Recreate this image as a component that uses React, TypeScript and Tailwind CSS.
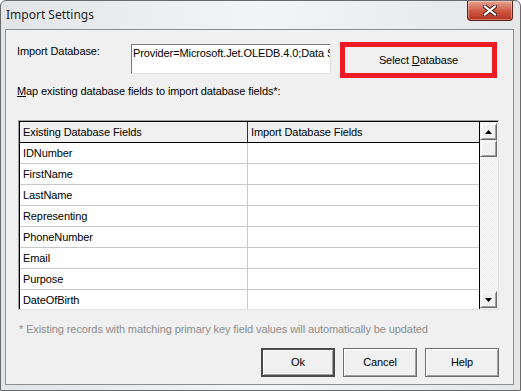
import React from 'react';

const fields = [
  'IDNumber',
  'FirstName',
  'LastName',
  'Representing',
  'PhoneNumber',
  'Email',
  'Purpose',
  'DateOfBirth',
];

function CloseGlyph() {
  return (
    <svg width="14" height="11" viewBox="0 0 14 11">
      <path
        d="M2 1.5 L12 9.5 M12 1.5 L2 9.5"
        stroke="#3b1a14"
        strokeWidth="4"
        strokeLinecap="square"
      />
      <path
        d="M2 1.5 L12 9.5 M12 1.5 L2 9.5"
        stroke="#ffffff"
        strokeWidth="2.2"
        strokeLinecap="square"
      />
    </svg>
  );
}

function Arrow({ down }: { down?: boolean }) {
  return (
    <svg width="7" height="4" viewBox="0 0 7 4">
      <path d={down ? 'M0 0 H7 L3.5 4 Z' : 'M0 4 H7 L3.5 0 Z'} fill="#000" />
    </svg>
  );
}

function ScrollButton({ children, className = '' }: { children?: React.ReactNode; className?: string }) {
  return (
    <div
      className={`w-[17px] h-[17px] flex items-center justify-center bg-[#f0f0f0] border border-t-[#f0f0f0] border-l-[#f0f0f0] border-r-[#696969] border-b-[#696969] shadow-[inset_1px_1px_0_#ffffff,inset_-1px_-1px_0_#a0a0a0] ${className}`}
    >
      {children}
    </div>
  );
}

function DialogButton({ label, isDefault }: { label: string; isDefault?: boolean }) {
  return (
    <button
      className={`w-[74px] h-[29px] flex items-center justify-center bg-[#f0f0f0] text-[11px] text-black ${
        isDefault
          ? 'border-2 border-[#4a4a4a] shadow-[inset_1px_1px_0_#ffffff,inset_-1px_-1px_0_#a0a0a0]'
          : 'border border-[#6e6e6e] shadow-[inset_1px_1px_0_#ffffff,inset_-1px_-1px_0_#a0a0a0]'
      }`}
    >
      {label}
    </button>
  );
}

export default function App() {
  return (
    <div
      className="relative w-[521px] h-[391px] overflow-hidden bg-gradient-to-r from-[#e2e5e8] via-[#f3f4f5] to-[#e4e6e8] border border-[#6a6a6a] rounded-t-[6px]"
      style={{ fontFamily: '"Liberation Sans", Arial, sans-serif' }}
    >
      {/* title bar */}
      <div className="h-[28px] flex items-center pl-[5px]">
        <span
          className="text-[12px] text-[#1e1e1e]"
          style={{ fontFamily: '"Noto Sans", "Open Sans", sans-serif' }}
        >
          Import Settings
        </span>
      </div>
      <div className="absolute left-[466px] top-0 w-[46px] h-[20px] rounded-b-[4px] border border-t-0 border-[#5c2318] bg-gradient-to-b from-[#e8a596] via-[#cf5b47] to-[#b8301d] flex items-center justify-center shadow-[inset_0_0_0_1px_rgba(255,255,255,0.35)]">
        <CloseGlyph />
      </div>

      {/* client area */}
      <div className="ml-[4px] w-[509px] h-[356px] border border-[#8c8c8c] bg-[#f0f0f0] text-[11px] tracking-[-0.1px] text-black">
        <div className="flex items-start pt-[12px] pl-[11px]">
          <div className="w-[114px] pt-[3px] leading-[13px]">Import Database:</div>
          <div className="mt-[2px] w-[200px] h-[30px] bg-white border border-t-[#7a7a7a] border-l-[#7a7a7a] border-r-[#e3e3e3] border-b-[#e3e3e3] overflow-hidden whitespace-nowrap pl-[1px] pt-[2px] leading-[13px]">
            Provider=Microsoft.Jet.OLEDB.4.0;Data Source=C:\Data\Visitors.mdb
          </div>
          <div className="ml-[9px] w-[157px] h-[36px] border-[5px] border-[#ed1c24] bg-[#f0f0f0] flex items-center justify-center whitespace-nowrap">
            <span>
              Select <u>D</u>atabase
            </span>
          </div>
        </div>

        <div className="mt-[7px] pl-[11px] leading-[13px]">
          <u>M</u>ap existing database fields to import database fields*:
        </div>

        {/* grid */}
        <div className="mt-[22px] ml-[12px] w-[481px] h-[190px] border border-[#a0a0a0] border-r-[#e3e3e3] border-b-[#e3e3e3] overflow-hidden">
          <div className="flex h-full border-t border-l border-black">
            <div className="flex-1 border-r border-black bg-white overflow-hidden">
              <div className="flex h-[21px] bg-[#f0f0f0] border-b border-black">
                <div className="w-[228px] border-r border-[#303030] pl-[3px] flex items-center">
                  Existing Database Fields
                </div>
                <div className="flex-1 pl-[3px] flex items-center">Import Database Fields</div>
              </div>
              {fields.map((f) => (
                <div key={f} className="flex h-[21px] border-b border-[#c8c8c8]">
                  <div className="w-[228px] border-r border-[#c8c8c8] pl-[3px] flex items-center">{f}</div>
                  <div className="flex-1" />
                </div>
              ))}
            </div>
            <div className="w-[18px] flex flex-col bg-[#f5f5f5] pt-[1px] pb-[1px]">
              <ScrollButton>
                <Arrow />
              </ScrollButton>
              <ScrollButton />
              <div className="flex-1 bg-[repeating-conic-gradient(#ececec_0%_25%,#fafafa_0%_50%)] bg-[length:2px_2px]" />
              <ScrollButton>
                <Arrow down />
              </ScrollButton>
            </div>
          </div>
        </div>

        <div className="mt-[13px] pl-[13px] leading-[13px] text-[#8d8d8d]">
          * Existing records with matching primary key field values will automatically be updated
        </div>

        <div className="mt-[12px] flex justify-end gap-[8px] pr-[14px]">
          <DialogButton label="Ok" isDefault />
          <DialogButton label="Cancel" />
          <DialogButton label="Help" />
        </div>
      </div>
    </div>
  );
}
